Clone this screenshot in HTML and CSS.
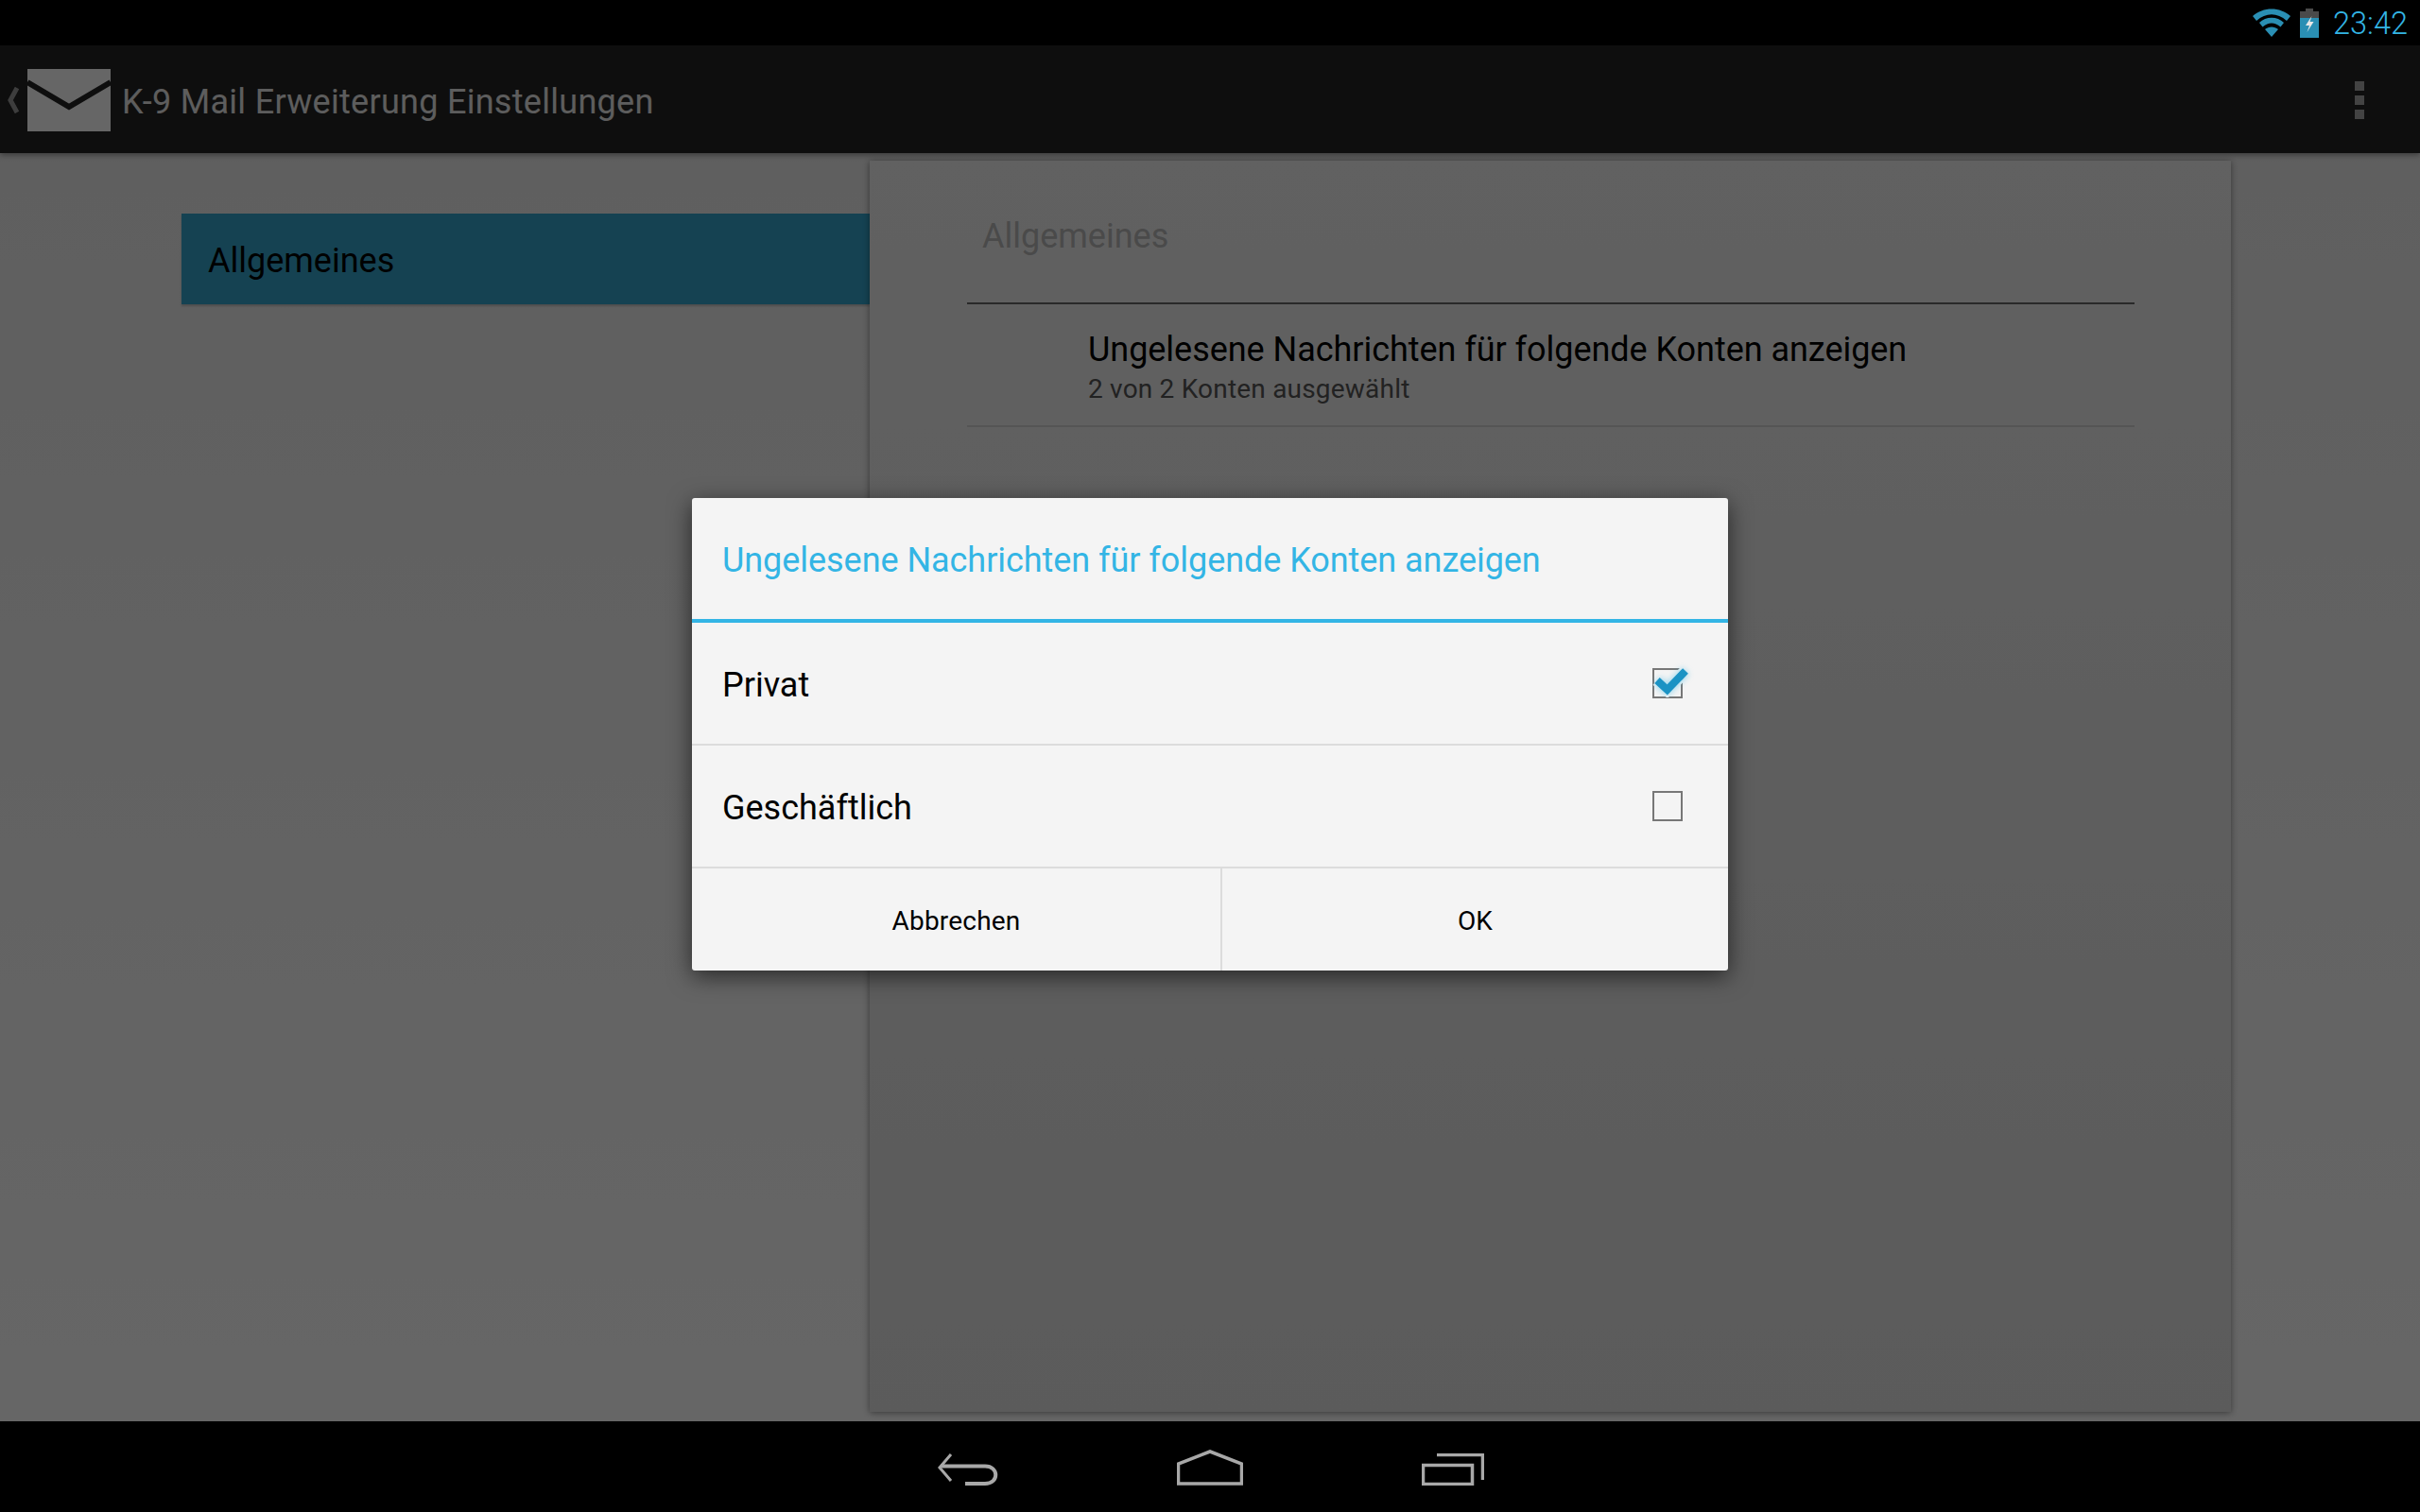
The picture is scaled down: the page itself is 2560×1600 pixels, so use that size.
FILE: index.html
```html
<!DOCTYPE html>
<html lang="de">
<head>
  <meta charset="UTF-8">
  <title>K-9 Mail Erweiterung Einstellungen</title>
  <link rel="stylesheet" href="styles.css">
</head>
<body>
  <!-- Statusleiste -->
  <div class="status-bar">
    <svg class="wifi-icon" width="40" height="30" viewBox="0 0 40 30">
      <path d="M0 8 C11 -2 29 -2 40 8 L36 13 C26 4 14 4 4 13 Z" fill="#2a8fb4"/>
      <path d="M7 15 C14 8 26 8 33 15 L29.500 19.500 C23 14 17 14 10.500 19.500 Z" fill="#2a8fb4"/>
      <path d="M13 22 C17 18.500 23 18.500 27 22 L20 30 Z" fill="#2a8fb4"/>
    </svg>
    <svg class="battery-icon" width="20" height="31" viewBox="0 0 20 31">
      <path d="M6 0 H14 V3 H20 V10 H0 V3 H6 Z" fill="#4a4a4a"/>
      <rect x="0" y="10" width="20" height="21" fill="#2a8fb4"/>
      <path d="M12.500 8 L6 18 H10 L7.500 25 L14.500 14 H10.500 Z" fill="#e8e8e8"/>
    </svg>
    <span class="clock">23:42</span>
  </div>

  <div class="screen">
    <!-- Aktionsleiste -->
    <header class="action-bar">
      <svg class="up-icon" width="14" height="28" viewBox="0 0 14 28">
        <path d="M10 1 L3 14 L10 27" fill="none" stroke="#9a9a9a" stroke-width="5"/>
      </svg>
      <svg class="app-icon" width="88" height="66" viewBox="0 0 88 66">
        <rect width="88" height="66" fill="#fff"/>
        <path d="M0 14 L44 40 L88 14" fill="none" stroke="#232323" stroke-width="6"/>
      </svg>
      <h1 class="action-title">K-9 Mail Erweiterung Einstellungen</h1>
      <div class="overflow">
        <span></span><span></span><span></span>
      </div>
    </header>

    <!-- Einstellungen -->
    <main class="settings">
      <nav class="headers">
        <div class="header-item">Allgemeines</div>
      </nav>
      <section class="card">
        <h2 class="category">Allgemeines</h2>
        <div class="pref">
          <div class="pref-title">Ungelesene Nachrichten für folgende Konten anzeigen</div>
          <div class="pref-summary">2 von 2 Konten ausgewählt</div>
        </div>
      </section>
    </main>

    <!-- Dialog -->
    <div class="scrim">
      <div class="dialog">
        <div class="dialog-title">Ungelesene Nachrichten für folgende Konten anzeigen</div>
        <div class="dialog-row">
          <span class="row-label">Privat</span>
          <span class="checkbox">
            <svg class="check-mark" width="44" height="40" viewBox="0 0 44 40">
              <path class="check-halo" d="M5 22 L15.700 32 L35 12" />
              <path class="check-glow" d="M5 22 L15.700 32 L35 12" />
              <path class="check-stroke" d="M5 22 L15.700 32 L35 12" />
            </svg>
          </span>
        </div>
        <div class="dialog-row">
          <span class="row-label">Geschäftlich</span>
          <span class="checkbox"></span>
        </div>
        <div class="dialog-buttons">
          <button class="dialog-btn btn-cancel"><span>Abbrechen</span></button>
          <button class="dialog-btn btn-ok"><span>OK</span></button>
        </div>
      </div>
    </div>
  </div>

  <!-- Navigationsleiste -->
  <footer class="nav-bar">
    <svg width="64" height="34" viewBox="0 0 64 34">
      <path d="M14 1 L2 15 L14 29" fill="none" stroke="#a8a8a8" stroke-width="3"/>
      <path d="M3 13.500 H50 C65 13.500 65 32 50 32 H29" fill="none" stroke="#a8a8a8" stroke-width="4"/>
    </svg>
    <svg width="70" height="38" viewBox="0 0 70 38">
      <path d="M1.500 36 V15 L35 2 L68.500 15 V36 Z" fill="none" stroke="#a8a8a8" stroke-width="3.500"/>
    </svg>
    <svg width="66" height="34" viewBox="0 0 66 34">
      <rect x="1.500" y="12.500" width="52" height="20" fill="none" stroke="#a8a8a8" stroke-width="3.500"/>
      <path d="M16 1.500 H64.500 V28" fill="none" stroke="#a8a8a8" stroke-width="3.500"/>
    </svg>
  </footer>
</body>
</html>
```

FILE: styles.css
```css
/* Allgemein */
html, body {
  margin: 0;
  padding: 0;
}
body {
  width: 2560px;
  height: 1600px;
  display: flex;
  flex-direction: column;
  background: #000;
  font-family: Roboto, sans-serif;
  overflow: hidden;
}

/* Statusleiste */
.status-bar {
  height: 48px;
  background: #000;
  display: flex;
  align-items: center;
  justify-content: flex-end;
  padding-right: 13px;
}
.wifi-icon {
  margin-right: 10px;
}
.battery-icon {
  margin-right: 15px;
}
.clock {
  color: #33b5e5;
  font-size: 32.5px;
  font-weight: 300;
  padding-top: 2px;
}

/* Hauptbereich */
.screen {
  flex: 1;
  position: relative;
  display: flex;
  flex-direction: column;
  background: linear-gradient(#ececec, #ffffff);
  min-height: 0;
}

/* Aktionsleiste */
.action-bar {
  height: 114px;
  flex: none;
  box-sizing: border-box;
  padding-top: 2px;
  background: #232323;
  display: flex;
  align-items: center;
  box-shadow: 0 2px 6px rgba(0, 0, 0, 0.4);
  position: relative;
}
.up-icon {
  margin-left: 8px;
  margin-right: 7px;
}
.app-icon {
  margin-right: 12px;
}
.action-title {
  margin: 0;
  padding-top: 4px;
  flex: 1;
  color: #e8e8e8;
  font-size: 36px;
  font-weight: 400;
  letter-spacing: 0.29px;
}
.overflow {
  display: flex;
  flex-direction: column;
  gap: 5px;
  margin-right: 59px;
}
.overflow span {
  width: 10px;
  height: 10px;
  background: #a8a8a8;
}

/* Einstellungen */
.settings {
  flex: 1;
  display: flex;
  padding: 8px 200px 10px 192px;
  min-height: 0;
}
.headers {
  width: 728px;
  padding-top: 56px;
}
.header-item {
  height: 96px;
  line-height: 100px;
  padding-left: 28px;
  background: #35a6ce;
  color: #000;
  font-size: 36px;
  box-shadow: 0 2px 2px rgba(0, 0, 0, 0.2);
}
.card {
  flex: 1;
  background: linear-gradient(#f2f2f2, #e4e4e4);
  box-shadow: 0 1px 7px rgba(0, 0, 0, 0.45);
  padding: 0 102px 0 103px;
}
.category {
  margin: 0;
  height: 152px;
  box-sizing: border-box;
  padding: 58px 0 0 16px;
  border-bottom: 2px solid #666;
  color: #b8b8b8;
  font-size: 36px;
  font-weight: 400;
  line-height: 44px;
}
.pref {
  height: 130px;
  box-sizing: border-box;
  padding: 26px 0 0 128px;
  border-bottom: 2px solid #d5d5d5;
}
.pref-title {
  color: #000;
  font-size: 36px;
  line-height: 44px;
  letter-spacing: -0.04px;
}
.pref-summary {
  color: #555;
  font-size: 28px;
  line-height: 36px;
  margin-top: 2px;
  letter-spacing: 0.2px;
}

/* Dialog */
.scrim {
  position: absolute;
  inset: 0;
  box-sizing: border-box;
  padding-top: 2px;
  background: rgba(0, 0, 0, 0.6);
  display: flex;
  align-items: center;
  justify-content: center;
}
.dialog {
  width: 1096px;
  background: #f4f4f4;
  border-radius: 3px;
  box-shadow: 0 6px 24px rgba(0, 0, 0, 0.6);
}
.dialog-title {
  height: 128px;
  line-height: 132px;
  padding-left: 32px;
  border-bottom: 4px solid #33b5e5;
  color: #33b5e5;
  font-size: 36px;
  letter-spacing: -0.05px;
}
.dialog-row {
  height: 128px;
  display: flex;
  align-items: center;
  justify-content: space-between;
  padding: 0 48px 0 32px;
  border-bottom: 2px solid #dcdcdc;
  color: #000;
  font-size: 36px;
}
.row-label {
  padding-top: 4px;
}
.checkbox {
  width: 28px;
  height: 28px;
  border: 2px solid #777;
  position: relative;
}
.check-mark {
  position: absolute;
  left: -2px;
  top: -11px;
}
.check-mark path {
  fill: none;
}
.check-halo {
  stroke: #f4f4f4;
  stroke-width: 13;
}
.check-glow {
  stroke: #33b5e5;
  stroke-opacity: 0.45;
  stroke-width: 10;
  filter: blur(3px);
}
.check-stroke {
  stroke: #1b93c4;
  stroke-width: 8;
}
.dialog-buttons {
  display: flex;
  height: 108px;
}
.dialog-btn {
  border: none;
  background: transparent;
  color: #000;
  font-family: Roboto, sans-serif;
  font-size: 28px;
  letter-spacing: 0.2px;
  padding: 3px 0 0;
}
.btn-cancel {
  width: 561px;
  border-right: 2px solid #dcdcdc;
}
.btn-ok {
  flex: 1;
}

/* Navigationsleiste */
.nav-bar {
  height: 96px;
  flex: none;
  box-sizing: border-box;
  background: #000;
  display: flex;
  align-items: flex-end;
  justify-content: center;
  gap: 189px;
  padding: 0 0 28px 2px;
}
```
